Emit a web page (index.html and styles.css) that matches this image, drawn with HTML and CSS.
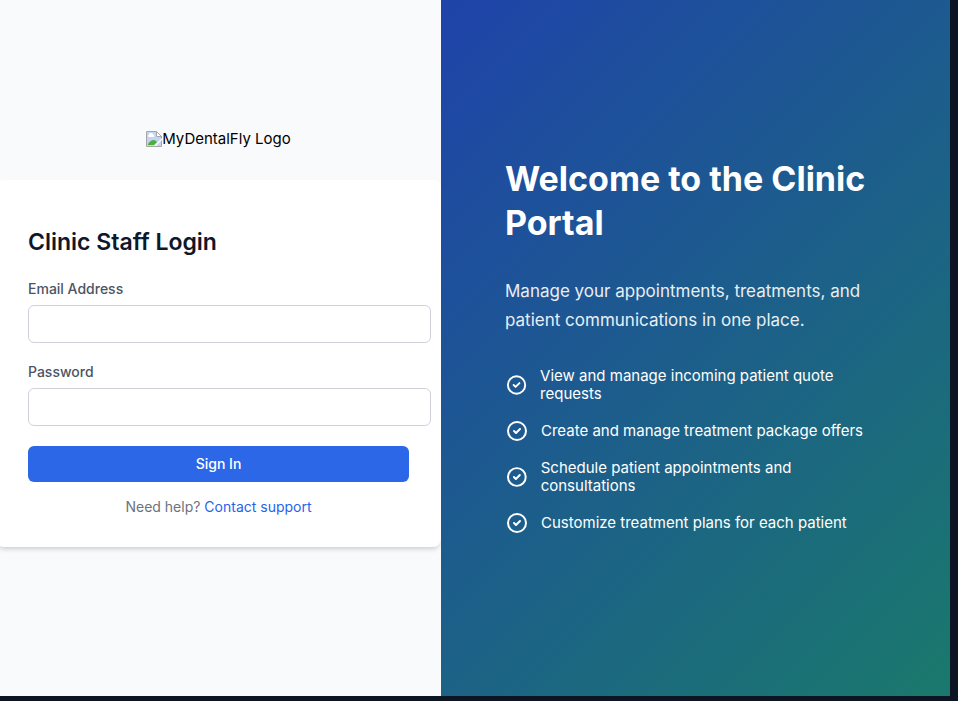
FILE: index.html
```html
<!DOCTYPE html>
<html lang="en">
<head>
<meta charset="utf-8">
<meta name="viewport" content="width=device-width, initial-scale=1">
<title>Clinic Staff Login</title>
<link rel="stylesheet" href="styles.css">
</head>
<body>
<svg class="sprite" width="0" height="0" aria-hidden="true">
  <symbol id="check-circle" viewBox="0 0 24 24">
    <circle cx="12" cy="12" r="9"/>
    <path d="m9 12 2 2 4-4"/>
  </symbol>
</svg>
<div class="page">
  <main class="login">
    <div class="logo">
      <svg class="logo-image" viewBox="0 0 16 16" width="16" height="16" aria-hidden="true">
        <path d="M.5.5h10l5 5v10H.5z" fill="#fff" stroke="#a6a6a6"/>
        <path d="M1 15V1h9v5h5v9z" fill="#c3d5f3"/>
        <path d="M3 6a1 1 0 0 1 0-2 2 2 0 0 1 4-.5A1.5 1.5 0 0 1 8 6z" fill="#fff"/>
        <path d="M2 14v-1c3-5 7-5 9-2l-3 3z" fill="#4caf3c"/>
        <path d="m8 15 8-8v2l-6 6z" fill="#f9fafc"/>
        <path d="M10.5.5v5h5z" fill="#fff" stroke="#a6a6a6"/>
      </svg><span>MyDentalFly Logo</span>
    </div>
    <section class="card">
      <h2>Clinic Staff Login</h2>
      <form>
        <div class="field">
          <label for="email">Email Address</label>
          <input id="email" type="email">
        </div>
        <div class="field">
          <label for="password">Password</label>
          <input id="password" type="password">
        </div>
        <button type="submit">Sign In</button>
      </form>
      <p class="help">Need help? <a href="#">Contact support</a></p>
    </section>
  </main>
  <aside class="welcome">
    <h1>Welcome to the Clinic Portal</h1>
    <p class="intro">Manage your appointments, treatments, and patient communications in one place.</p>
    <ul>
      <li><svg class="check"><use href="#check-circle"/></svg><span>View and manage incoming patient quote requests</span></li>
      <li><svg class="check"><use href="#check-circle"/></svg><span>Create and manage treatment package offers</span></li>
      <li><svg class="check"><use href="#check-circle"/></svg><span>Schedule patient appointments and consultations</span></li>
      <li><svg class="check"><use href="#check-circle"/></svg><span>Customize treatment plans for each patient</span></li>
    </ul>
  </aside>
</div>
</body>
</html>
```
FILE: styles.css
```css
* {
  box-sizing: border-box;
}

body {
  margin: 0;
  background: #0d1524;
  color: #000;
  font: 15px/18px Inter, "Liberation Sans", sans-serif;
}

h1, h2, p, ul {
  margin: 0;
  padding: 0;
}

.sprite {
  position: absolute;
}

.page {
  display: grid;
  grid-template-columns: 441fr 509fr;
  min-height: calc(100vh - 5px);
  margin: 0 8px 5px 0;
}

.login {
  display: flex;
  flex-direction: column;
  justify-content: center;
  padding-bottom: 19px;
  background: #f9fafc;
}

.logo {
  display: flex;
  align-items: center;
  justify-content: center;
  margin-bottom: 32px;
  padding-right: 4px;
}

.card {
  margin-left: -4px;
  padding: 48px 32px 32px;
  border-radius: 8px;
  background: #fff;
  box-shadow: 0 4px 5px -2px rgb(0 0 0 / 18%);
}

h2 {
  margin-bottom: 24px;
  color: #0f172a;
  font-size: 23px;
  font-weight: 600;
  line-height: 28px;
}

.field {
  margin-bottom: 20px;
}

label {
  display: block;
  margin-bottom: 8px;
  color: #4b5563;
  font-size: 14px;
  font-weight: 500;
  line-height: 17px;
}

input {
  display: block;
  width: calc(100% + 22px);
  height: 38px;
  padding: 10px;
  border: 1px solid #d1d1db;
  border-radius: 6px;
  background: #fff;
  font: inherit;
}

button {
  display: block;
  width: 100%;
  height: 36px;
  border: 0;
  border-radius: 6px;
  background: #2b67e6;
  color: #fff;
  font: 500 14px/16px Inter, "Liberation Sans", sans-serif;
}

.help {
  margin-top: 16px;
  color: #6b7280;
  font-size: 14px;
  line-height: 17px;
  text-align: center;
}

.help a {
  color: #2563eb;
  text-decoration: none;
}

.welcome {
  display: flex;
  flex-direction: column;
  justify-content: center;
  padding: 0 64px 5px;
  background: linear-gradient(135deg, #1f43aa, #1a796c);
  color: #fff;
}

h1 {
  margin-bottom: 32px;
  font-size: 34px;
  font-weight: 700;
  line-height: 44px;
}

.intro {
  margin-bottom: 32px;
  font-size: 17px;
  line-height: 29px;
  opacity: 0.9;
}

ul {
  display: grid;
  gap: 16px;
  list-style: none;
}

li {
  display: flex;
  align-items: center;
  gap: 12px;
}

.check {
  width: 24px;
  height: 24px;
  fill: none;
  stroke: #fff;
  stroke-width: 2;
  stroke-linecap: round;
  stroke-linejoin: round;
}
```
